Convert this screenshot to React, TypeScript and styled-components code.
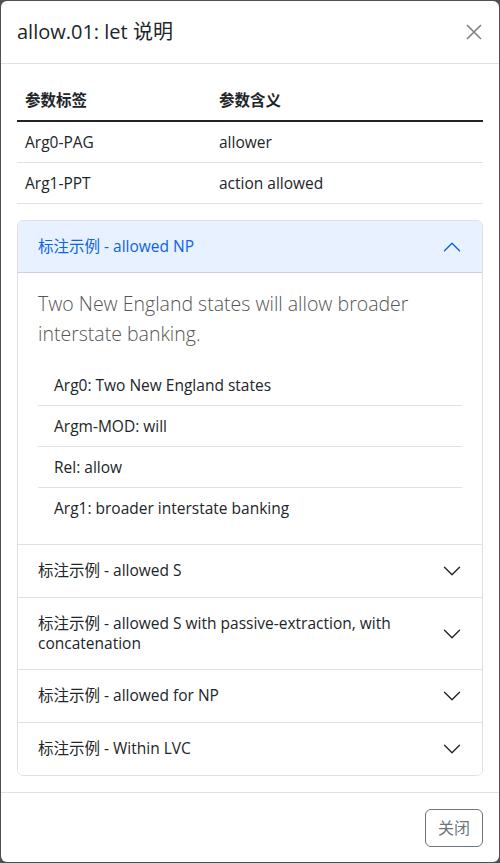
import React, { useState } from 'react';
import styled, { createGlobalStyle } from 'styled-components';

const GlobalStyle = createGlobalStyle`
  html, body {
    margin: 0;
    padding: 0;
    background: #505050;
  }
  body {
    font-family: "Open Sans", "Noto Sans CJK SC", sans-serif;
    color: #212529;
    font-size: 16px;
    line-height: 1.5;
  }
  * { box-sizing: border-box; }
`;

const Backdrop = styled.div`
  height: 863px;
  padding: 1px;
`;

const Modal = styled.div`
  height: 100%;
  background: #fff;
  border-radius: 6px;
  display: flex;
  flex-direction: column;
  overflow: hidden;
`;

const Header = styled.div`
  display: flex;
  align-items: center;
  justify-content: space-between;
  padding: 16px;
  border-bottom: 1px solid #dee2e6;
`;

const Title = styled.h5`
  margin: 0;
  font-size: 20px;
  font-weight: 400;
  line-height: 30px;
`;

const CloseButton = styled.button`
  width: 16px;
  height: 16px;
  padding: 0;
  margin-right: 1px;
  border: 0;
  background: none;
  color: #808080;
  cursor: pointer;
  display: flex;
`;

const Body = styled.div`
  flex: 1;
  padding: 16px;
`;

const Table = styled.table`
  width: 100%;
  border-collapse: collapse;
  margin-bottom: 16px;

  th, td {
    padding: 8px;
    text-align: left;
    border-bottom: 1px solid #dee2e6;
    line-height: 24px;
    font-size: 15.5px;
  }
  th {
    font-weight: 700;
    border-bottom: 2px solid #212529;
  }
  th:first-child, td:first-child {
    width: 194px;
  }
`;

const Accordion = styled.div`
  border: 1px solid #dee2e6;
  border-radius: 6px;
  overflow: hidden;
`;

const Item = styled.div`
  & + & {
    border-top: 1px solid #dee2e6;
  }
`;

const ItemButton = styled.button<{ $open: boolean }>`
  width: 100%;
  display: flex;
  align-items: center;
  gap: 16px;
  padding: 16px 20px;
  border: 0;
  text-align: left;
  font: inherit;
  font-size: 15.5px;
  line-height: 19.5px;
  cursor: pointer;
  background: ${(p) => (p.$open ? '#e7f1ff' : '#fff')};
  color: ${(p) => (p.$open ? '#0c63e4' : '#212529')};
  box-shadow: ${(p) => (p.$open ? 'inset 0 -1px 0 rgba(0,0,0,.125)' : 'none')};
`;

const ItemLabel = styled.span`
  flex: 1;
`;

const Chevron = styled.svg<{ $open: boolean }>`
  width: 20px;
  height: 20px;
  flex-shrink: 0;
  transform: ${(p) => (p.$open ? 'rotate(180deg)' : 'none')};
`;

const ItemBody = styled.div`
  padding: 16px 20px;
`;

const Lead = styled.p`
  margin: 0 0 16px;
  font-size: 19.5px;
  font-weight: 300;
  line-height: 30px;
  color: #555;
`;

const List = styled.ul`
  list-style: none;
  margin: 0;
  padding: 0;
`;

const ListItem = styled.li`
  padding: 8px 16px;
  font-size: 15.5px;
  line-height: 24px;
  & + & {
    border-top: 1px solid #dee2e6;
  }
`;

const Footer = styled.div`
  display: flex;
  justify-content: flex-end;
  height: 71px;
  padding: 16px;
  border-top: 1px solid #dee2e6;
`;

const SecondaryButton = styled.button`
  height: 38px;
  padding: 6px 12px;
  font: inherit;
  line-height: 24px;
  color: #6c757d;
  background: #fff;
  border: 1px solid #6c757d;
  border-radius: 6px;
  cursor: pointer;
`;

const roles = [
  ['Arg0-PAG', 'allower'],
  ['Arg1-PPT', 'action allowed'],
];

const examples = [
  {
    name: 'allowed NP',
    text: 'Two New England states will allow broader interstate banking.',
    args: ['Arg0: Two New England states', 'Argm-MOD: will', 'Rel: allow', 'Arg1: broader interstate banking'],
  },
  { name: 'allowed S', text: '', args: [] },
  { name: 'allowed S with passive-extraction, with concatenation', text: '', args: [] },
  { name: 'allowed for NP', text: '', args: [] },
  { name: 'Within LVC', text: '', args: [] },
];

const App = () => {
  const [open, setOpen] = useState(0);
  return (
    <Backdrop>
      <GlobalStyle />
      <Modal>
        <Header>
          <Title>allow.01: let 说明</Title>
          <CloseButton aria-label="Close">
            <svg width="16" height="16" viewBox="0 0 16 16">
              <path d="M1 1L15 15M15 1L1 15" stroke="currentColor" strokeWidth="1.6" />
            </svg>
          </CloseButton>
        </Header>
        <Body>
          <Table>
            <thead>
              <tr>
                <th>参数标签</th>
                <th>参数含义</th>
              </tr>
            </thead>
            <tbody>
              {roles.map(([tag, meaning]) => (
                <tr key={tag}>
                  <td>{tag}</td>
                  <td>{meaning}</td>
                </tr>
              ))}
            </tbody>
          </Table>
          <Accordion>
            {examples.map((ex, i) => (
              <Item key={ex.name}>
                <ItemButton $open={open === i} onClick={() => setOpen(open === i ? -1 : i)}>
                  <ItemLabel>标注示例 - {ex.name}</ItemLabel>
                  <Chevron $open={open === i} viewBox="0 0 16 16" fill="none">
                    <path
                      d="M2 5L8 11L14 5"
                      stroke={open === i ? '#0c63e4' : '#212529'}
                      strokeWidth="1.1"
                      strokeLinecap="round"
                      strokeLinejoin="round"
                    />
                  </Chevron>
                </ItemButton>
                {open === i && (
                  <ItemBody>
                    <Lead>{ex.text}</Lead>
                    <List>
                      {ex.args.map((a) => (
                        <ListItem key={a}>{a}</ListItem>
                      ))}
                    </List>
                  </ItemBody>
                )}
              </Item>
            ))}
          </Accordion>
        </Body>
        <Footer>
          <SecondaryButton>关闭</SecondaryButton>
        </Footer>
      </Modal>
    </Backdrop>
  );
};

export default App;
